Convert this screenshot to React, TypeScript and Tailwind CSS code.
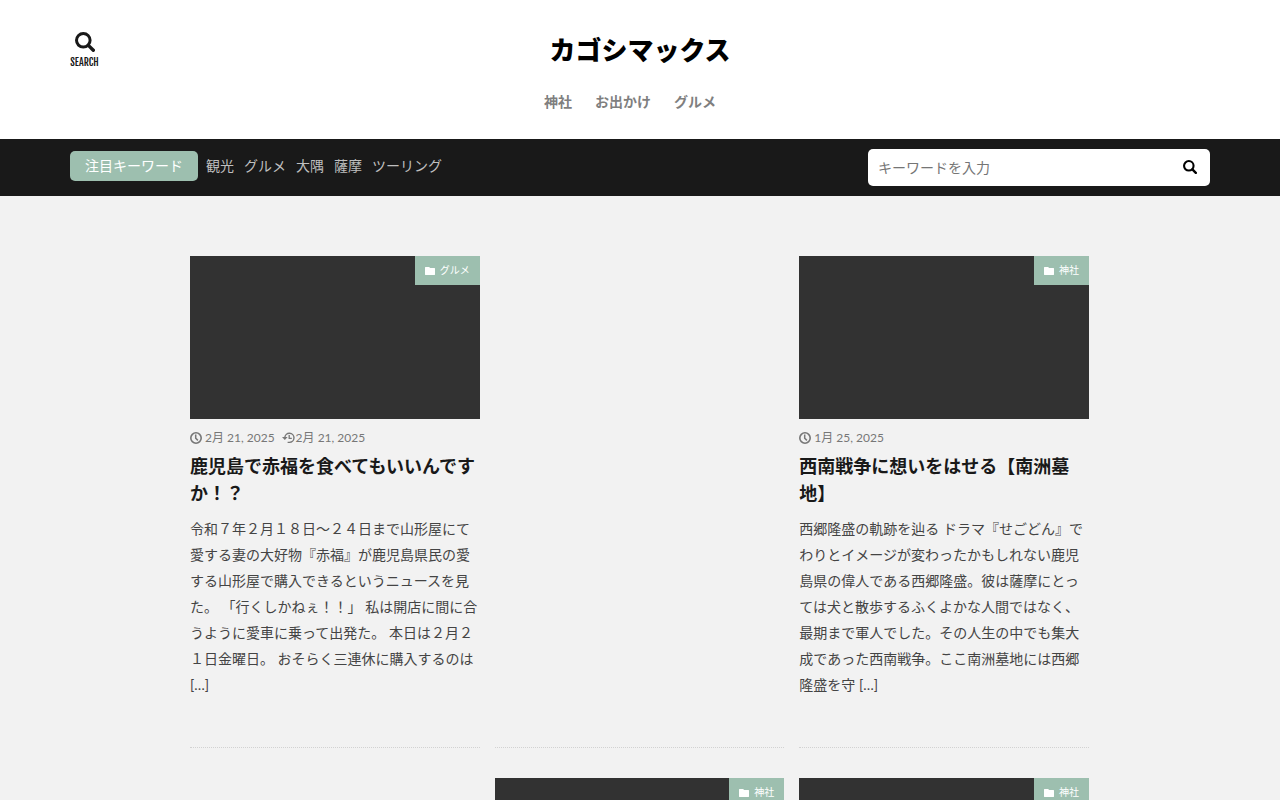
import React from "react";

const keywords = ["観光", "グルメ", "大隅", "薩摩", "ツーリング"];
const navItems = ["神社", "お出かけ", "グルメ"];

type Post = {
  category?: string;
  published?: string;
  updated?: string;
  title?: string;
  excerpt?: string;
};

const posts: Post[] = [
  {
    category: "グルメ",
    published: "2月 21, 2025",
    updated: "2月 21, 2025",
    title: "鹿児島で赤福を食べてもいいんですか！？",
    excerpt:
      "令和７年２月１８日～２４日まで山形屋にて愛する妻の大好物『赤福』が鹿児島県民の愛する山形屋で購入できるというニュースを見た。 「行くしかねぇ！！」 私は開店に間に合うように愛車に乗って出発た。 本日は２月２１日金曜日。 おそらく三連休に購入するのは […]",
  },
  {},
  {
    category: "神社",
    published: "1月 25, 2025",
    title: "西南戦争に想いをはせる【南洲墓地】",
    excerpt:
      "西郷隆盛の軌跡を辿る ドラマ『せごどん』でわりとイメージが変わったかもしれない鹿児島県の偉人である西郷隆盛。彼は薩摩にとっては犬と散歩するふくよかな人間ではなく、最期まで軍人でした。その人生の中でも集大成であった西南戦争。ここ南洲墓地には西郷隆盛を守 […]",
  },
  {},
  { category: "神社" },
  { category: "神社" },
];

function SearchIcon({ className }: { className: string }) {
  return (
    <svg viewBox="0 0 20 20" className={className} fill="none" stroke="currentColor" aria-hidden="true">
      <circle cx="8.3" cy="8.3" r="6.8" strokeWidth="3" />
      <path d="M13.4 13.4 18.3 18.3" strokeWidth="3.4" strokeLinecap="round" />
    </svg>
  );
}

function ClockIcon() {
  return (
    <svg viewBox="0 0 12 12" className="size-3" fill="none" stroke="currentColor" aria-hidden="true">
      <circle cx="6" cy="6" r="5.2" strokeWidth="1.6" />
      <path d="M5.7 2.6V6.2L7.9 8.4" strokeWidth="1.5" />
    </svg>
  );
}

function HistoryIcon() {
  return (
    <svg viewBox="0 0 13 12" className="h-3 w-[13px]" fill="none" stroke="currentColor" aria-hidden="true">
      <path d="M2.8 5.6A4.6 4.6 0 1 1 7.4 10.4H5.6" strokeWidth="1.4" />
      <path d="M7.2 3V6.3H9.8" strokeWidth="1.3" />
      <path d="M0 4.9H5.6L2.8 8.1Z" fill="currentColor" stroke="none" />
    </svg>
  );
}

function FolderIcon() {
  return (
    <svg viewBox="0 0 10 8" className="h-2 w-[10px]" fill="currentColor" aria-hidden="true">
      <path d="M0 0.4Q0 0 .4 0H4L5.3 1H9.6Q10 1 10 1.4V7.6Q10 8 9.6 8H.4Q0 8 0 7.6Z" />
    </svg>
  );
}

function PostCard({ post }: { post: Post }) {
  return (
    <article className="min-h-[492px] border-b border-dotted border-[#d2d2d2] pb-12">
      {post.category && (
        <div className="flex aspect-video items-start justify-end bg-[#323232]">
          <a href="#" className="flex h-[29px] items-center gap-[5px] bg-[#9dbfaf] px-[10px] text-[10px] text-white">
            <FolderIcon />
            {post.category}
          </a>
        </div>
      )}
      {post.title && (
        <>
          <div className="mt-[10px] flex h-[18px] items-center gap-[7px] text-[12px] leading-[18px] text-[#777777]">
            <span className="flex items-center gap-[3px]">
              <ClockIcon />
              <time>{post.published}</time>
            </span>
            {post.updated && (
              <span className="flex items-center gap-px">
                <HistoryIcon />
                <time>{post.updated}</time>
              </span>
            )}
          </div>
          <h2 className="mt-[6px] text-[18px] leading-[27px] font-bold text-[#191919]">
            <a href="#">{post.title}</a>
          </h2>
          <p className="mt-[9px] text-[14px] leading-[26px] text-[#444444]">{post.excerpt}</p>
        </>
      )}
    </article>
  );
}

export default function App() {
  return (
    <div className="min-h-screen bg-[#f2f2f2] font-[Lato,'Noto_Sans_CJK_JP',sans-serif] text-[#191919]">
      <header className="bg-white px-[70px]">
        <div className="mx-auto grid h-[139px] max-w-[1140px] grid-cols-[1fr_auto_1fr] items-start">
          <button type="button" className="mt-8 flex w-[29px] flex-col items-center gap-1">
            <SearchIcon className="size-5" />
            <span className="font-['Fjalla_One','Noto_Sans_ExtraCondensed','Open_Sans_Condensed','Roboto_Condensed','Liberation_Sans_Narrow',sans-serif] text-[10px] leading-3">
              SEARCH
            </span>
          </button>
          <div className="flex flex-col items-center">
            <h1 className="mt-8 text-[26px] leading-9 font-black text-black">
              <a href="#">カゴシマックス</a>
            </h1>
            <nav aria-label="メインメニュー" className="mt-6 pr-5">
              <ul className="flex gap-[23px] text-[14px] leading-5 font-bold text-[#7f7f7f]">
                {navItems.map((item) => (
                  <li key={item}>
                    <a href="#">{item}</a>
                  </li>
                ))}
              </ul>
            </nav>
          </div>
        </div>
      </header>

      <div className="bg-[#191919] px-[70px]">
        <div className="mx-auto flex h-[57px] max-w-[1140px] items-center justify-between">
          <div className="flex items-center gap-2 pb-1 text-[14px]">
            <span className="rounded-[5px] bg-[#9dbfaf] px-[15px] leading-[30px] text-white">注目キーワード</span>
            <ul className="flex gap-[10px] text-[#bfbfbf]">
              {keywords.map((word) => (
                <li key={word}>
                  <a href="#">{word}</a>
                </li>
              ))}
            </ul>
          </div>
          <form role="search" className="flex h-[37px] w-[30%] items-center rounded-[5px] bg-white pr-3">
            <input
              type="search"
              aria-label="キーワードを入力"
              placeholder="キーワードを入力"
              className="min-w-0 flex-1 px-[10px] text-[14px] outline-none placeholder:text-[#757575]"
            />
            <button type="submit" aria-label="検索" className="p-px pb-[3px] text-black">
              <SearchIcon className="size-[14px]" />
            </button>
          </form>
        </div>
      </div>

      <main className="mx-auto grid max-w-[900px] grid-cols-3 gap-x-[15px] gap-y-[30px] pt-[60px] pr-px pb-[60px]">
        {posts.map((post, i) => (
          <PostCard key={i} post={post} />
        ))}
      </main>
    </div>
  );
}
